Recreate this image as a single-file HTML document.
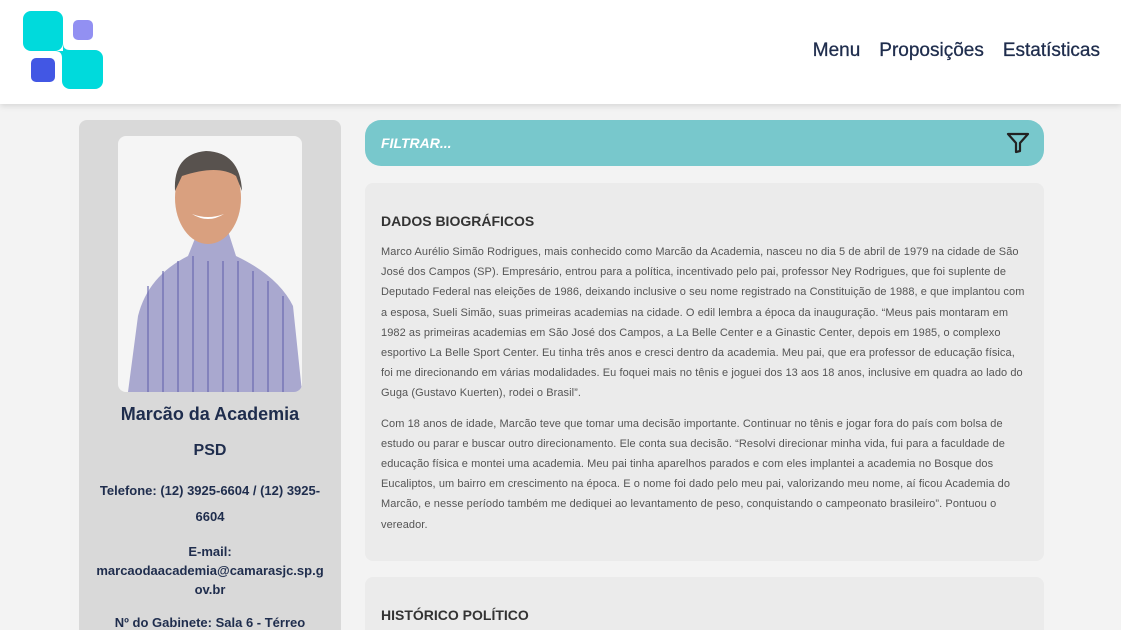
<!DOCTYPE html>
<html><head><meta charset="utf-8"><style>
*{margin:0;padding:0;box-sizing:border-box}
html,body{width:1121px;height:630px;overflow:hidden}
body{background:#f3f3f3;font-family:"Liberation Sans",sans-serif;position:relative}
.hdr{position:absolute;left:0;top:0;width:1121px;height:104px;background:#fff;box-shadow:0 2px 6px rgba(0,0,0,.12);z-index:2}
.nav{position:absolute;right:21px;top:40px;font-size:19px;color:#1f2d4d;display:flex;gap:19px;-webkit-text-stroke:.3px #1f2d4d}
.side{position:absolute;left:79px;top:120px;width:262px;height:520px;background:#d9d9d9;border-radius:8px;text-align:center;color:#1f2d4d;font-weight:bold}
.photo{position:absolute;left:39px;top:16px;width:184px;height:256px;background:#f5f5f5;border-radius:8px;overflow:hidden}
.filt{position:absolute;left:365px;top:120px;width:679px;height:46px;background:#78c8cc;border-radius:16px}
.filt span{position:absolute;left:16px;top:15px;color:#fff;font-size:14px;font-weight:bold;font-style:italic}
.card{position:absolute;left:365px;width:679px;background:#ebebeb;border-radius:8px;padding:0 16px}
.card h3{font-size:14px;color:#333;margin-top:30px}
.card p{font-size:11px;line-height:20.2px;color:#555;margin-top:13px;letter-spacing:.08px}
.card p+p{margin-top:10px}
</style></head><body>
<div class="hdr">
<svg style="position:absolute;left:22px;top:10px" width="82" height="80">
<rect x="1" y="1" width="40" height="40" rx="8" fill="#00dadc"/>
<rect x="40" y="40" width="41" height="39" rx="8" fill="#00dadc"/>
<path d="M33 41 L41 41 L41 33 Q41 40 48 40 L40 48 Q40 41 33 41Z" fill="#00dadc"/>
<rect x="51" y="10" width="20" height="20" rx="5" fill="#9290f2"/>
<rect x="9" y="48" width="24" height="24" rx="5" fill="#4257e4"/>
</svg>
<div class="nav"><span>Menu</span><span>Proposições</span><span>Estatísticas</span></div>
</div>
<div class="side">
<div class="photo"><svg width="184" height="256">
<path d="M10 256 L20 180 Q30 140 70 120 L80 95 L110 95 L118 120 Q160 140 175 170 L184 256Z" fill="#a9a8cf"/>
<g stroke="#6b6ab0" stroke-width="2" opacity=".6"><path d="M30 256V150M45 256V135M60 256V125M75 256V120M90 256V125M105 256V125M120 256V125M135 256V135M150 256V145M165 256V160"/></g>
<ellipse cx="90" cy="62" rx="33" ry="46" fill="#d9a07f"/>
<path d="M57 55 Q55 18 88 15 Q122 16 124 55 L118 40 Q100 28 64 40Z" fill="#58524e"/>
<path d="M74 78 Q90 88 106 78 Q90 84 74 78Z" fill="#fff"/>
</svg></div>
<div style="position:absolute;top:284px;width:100%;font-size:18px">Marcão da Academia</div>
<div style="position:absolute;top:322px;width:100%;font-size:16px">PSD</div>
<div style="position:absolute;top:358px;left:16px;right:16px;font-size:13px;line-height:26px">Telefone: (12) 3925-6604 / (12) 3925-6604</div>
<div style="position:absolute;top:422px;left:14px;right:14px;font-size:13px;line-height:19px;word-break:break-all">E-mail:<br>marcaodaacademia@camarasjc.sp.gov.br</div>
<div style="position:absolute;top:495px;width:100%;font-size:13px">Nº do Gabinete: Sala 6 - Térreo</div>
</div>
<div class="filt"><span>FILTRAR...</span>
<svg style="position:absolute;left:641px;top:12px" width="24" height="22" viewBox="0 0 24 22"><path d="M2 2H22L14 11V19L10 20V11Z" fill="none" stroke="#222" stroke-width="2.2" stroke-linejoin="round"/></svg></div>
<div class="card" style="top:183px;height:378px">
<h3>DADOS BIOGRÁFICOS</h3>
<p>Marco Aurélio Simão Rodrigues, mais conhecido como Marcão da Academia, nasceu no dia 5 de abril de 1979 na cidade de São José dos Campos (SP). Empresário, entrou para a política, incentivado pelo pai, professor Ney Rodrigues, que foi suplente de Deputado Federal nas eleições de 1986, deixando inclusive o seu nome registrado na Constituição de 1988, e que implantou com a esposa, Sueli Simão, suas primeiras academias na cidade. O edil lembra a época da inauguração. “Meus pais montaram em 1982 as primeiras academias em São José dos Campos, a La Belle Center e a Ginastic Center, depois em 1985, o complexo esportivo La Belle Sport Center. Eu tinha três anos e cresci dentro da academia. Meu pai, que era professor de educação física, foi me direcionando em várias modalidades. Eu foquei mais no tênis e joguei dos 13 aos 18 anos, inclusive em quadra ao lado do Guga (Gustavo Kuerten), rodei o Brasil”.</p>
<p>Com 18 anos de idade, Marcão teve que tomar uma decisão importante. Continuar no tênis e jogar fora do país com bolsa de estudo ou parar e buscar outro direcionamento. Ele conta sua decisão. “Resolvi direcionar minha vida, fui para a faculdade de educação física e montei uma academia. Meu pai tinha aparelhos parados e com eles implantei a academia no Bosque dos Eucaliptos, um bairro em crescimento na época. E o nome foi dado pelo meu pai, valorizando meu nome, aí ficou Academia do Marcão, e nesse período também me dediquei ao levantamento de peso, conquistando o campeonato brasileiro”. Pontuou o vereador.</p>
</div>
<div class="card" style="top:577px;height:80px"><h3>HISTÓRICO POLÍTICO</h3></div>
</body></html>
